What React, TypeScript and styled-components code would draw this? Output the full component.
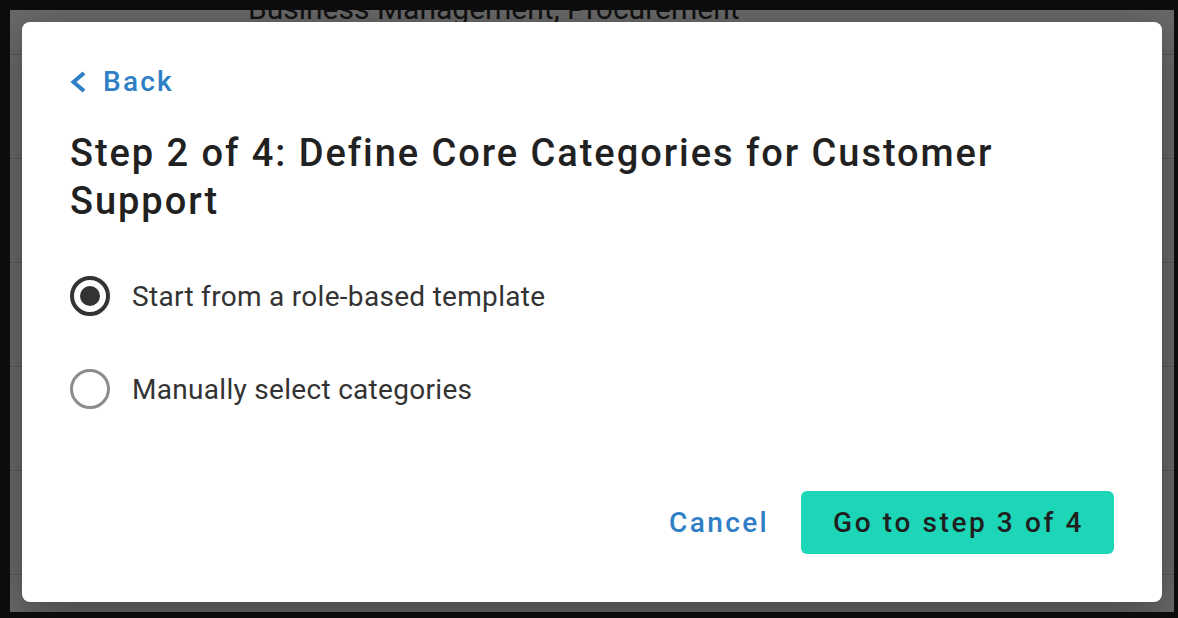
import React, { useState } from 'react'
import styled, { createGlobalStyle } from 'styled-components'

const GlobalStyle = createGlobalStyle`
	html, body {
		margin: 0;
		padding: 0;
		background: #0c0c0c;
		font-family: Roboto, 'Liberation Sans', Arial, sans-serif;
	}
	* {
		box-sizing: border-box;
	}
`

const Frame = styled.div`
	width: 1178px;
	height: 618px;
	padding: 10px 4px 6px 10px;
`

const Page = styled.div`
	position: relative;
	height: 100%;
	background: #696969;
	overflow: hidden;
`

const PageHeading = styled.div`
	height: 68px;
	margin-top: -23px;
	padding-left: 238px;
	font-size: 30px;
	line-height: 44px;
	color: #111;
	border-bottom: 1px solid #595959;
`

const PageRow = styled.div`
	height: 104px;
	border-bottom: 1px solid #595959;
`

const Overlay = styled.div`
	position: absolute;
	inset: 0;
	display: flex;
	padding: 12px 12px 10px;
`

const Modal = styled.div`
	flex: 1;
	display: flex;
	flex-direction: column;
	padding: 48px;
	background: #fff;
	border-radius: 8px;
	box-shadow: 0 10px 40px rgba(0, 0, 0, 0.35);
`

const BackLink = styled.button`
	display: flex;
	align-items: center;
	gap: 17px;
	align-self: flex-start;
	height: 24px;
	padding: 0;
	border: none;
	background: none;
	color: #2f7fc6;
	font-family: inherit;
	font-size: 28px;
	font-weight: 500;
	line-height: 24px;
	letter-spacing: 2.2px;
	cursor: pointer;
`

const Title = styled.h1`
	margin: 35px 0 0;
	font-size: 38px;
	font-weight: 500;
	line-height: 48px;
	letter-spacing: 1.95px;
	color: #212121;
`

const Options = styled.div`
	display: flex;
	flex-direction: column;
	gap: 53px;
	margin-top: 51px;
`

const Option = styled.label`
	display: flex;
	align-items: center;
	gap: 22px;
	height: 40px;
	font-size: 28px;
	letter-spacing: 0.3px;
	color: #333;
	cursor: pointer;
`

const Radio = styled.span<{ $checked: boolean }>`
	display: flex;
	align-items: center;
	justify-content: center;
	flex: none;
	width: 40px;
	height: 40px;
	border-radius: 50%;
	border: ${p => (p.$checked ? '4px solid #333' : '3.5px solid #8c8c8c')};

	&::after {
		content: '';
		width: 20px;
		height: 20px;
		border-radius: 50%;
		background: #333;
		display: ${p => (p.$checked ? 'block' : 'none')};
	}
`

const Footer = styled.div`
	display: flex;
	justify-content: flex-end;
	align-items: center;
	gap: 32px;
	margin-top: auto;
`

const TextButton = styled.button`
	padding: 0;
	border: none;
	background: none;
	color: #2f7fc6;
	font-family: inherit;
	font-size: 28px;
	font-weight: 500;
	letter-spacing: 2.4px;
	cursor: pointer;
`

const PrimaryButton = styled.button`
	height: 63px;
	padding: 0 30px 0 32px;
	border: none;
	border-radius: 6px;
	background: #1dd6b8;
	color: #1f1f1f;
	font-family: inherit;
	font-size: 28px;
	font-weight: 500;
	letter-spacing: 2.6px;
	cursor: pointer;
`

const ChevronLeft = () => (
	<svg width='16' height='22' viewBox='0 0 16 22' fill='none'>
		<path d='M14 2 L3.5 11 L14 20' stroke='currentColor' strokeWidth='4' />
	</svg>
)

const options = ['Start from a role-based template', 'Manually select categories']

export default function App() {
	const [selected, setSelected] = useState<number>(0)

	return (
		<>
			<GlobalStyle />
			<Frame>
				<Page>
					<PageHeading>Business Management, Procurement</PageHeading>
					<PageRow />
					<PageRow />
					<PageRow />
					<PageRow />
					<PageRow />
					<Overlay>
						<Modal>
							<BackLink>
								<ChevronLeft />
								Back
							</BackLink>
							<Title>Step 2 of 4: Define Core Categories for Customer Support</Title>
							<Options>
								{options.map((label, i) => (
									<Option key={label} onClick={() => setSelected(i)}>
										<Radio $checked={selected === i} />
										{label}
									</Option>
								))}
							</Options>
							<Footer>
								<TextButton>Cancel</TextButton>
								<PrimaryButton>Go to step 3 of 4</PrimaryButton>
							</Footer>
						</Modal>
					</Overlay>
				</Page>
			</Frame>
		</>
	)
}
